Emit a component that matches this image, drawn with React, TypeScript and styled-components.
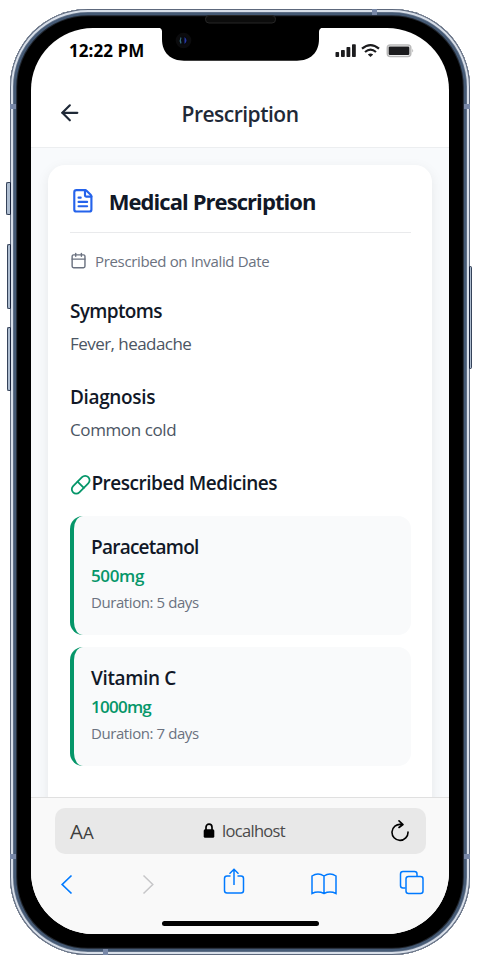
import React from "react";
import styled, { createGlobalStyle } from "styled-components";
import { ArrowLeft, Calendar, FileText, Pill } from "lucide-react";

const GlobalStyle = createGlobalStyle`
  * { box-sizing: border-box; }
  body { margin: 0; background: #fff; overflow: hidden; }
`;

const Page = styled.div`
  width: 490px;
  height: 965px;
  padding: 9px 0 0 10px;
  overflow: hidden;
  font-family: "Open Sans", "Noto Sans", sans-serif;
  color: #111827;
`;

const Device = styled.div`
  position: relative;
  width: 460px;
  height: 946px;
  padding: 19px 21px 20px;
  border-radius: 78px;
  background: #000;
  box-shadow:
    inset 0 0 0 1px #5d687c,
    inset 0 0 0 3px #d8dfe9,
    inset 0 0 0 3.8px #66758c,
    inset 0 0 0 6.2px #455a75,
    inset 0 0 0 7.2px #20252d;
`;

const SideButton = styled.div<{ $side: "left" | "right"; $top: number; $height: number; $out: number }>`
  position: absolute;
  ${(p) => p.$side}: ${(p) => -p.$out}px;
  top: ${(p) => p.$top}px;
  width: ${(p) => p.$out + 1}px;
  height: ${(p) => p.$height}px;
  border: 1px solid #35435a;
  border-${(p) => (p.$side === "left" ? "right" : "left")}-color: #17213a;
  border-radius: ${(p) => (p.$side === "left" ? "2px 0 0 2px" : "0 2px 2px 0")};
  background: #aebdd0;
`;

const Antenna = styled.div<{ $x: number; $y: number; $vertical?: boolean }>`
  position: absolute;
  left: ${(p) => p.$x}px;
  top: ${(p) => p.$y}px;
  width: ${(p) => (p.$vertical ? 6 : 5)}px;
  height: ${(p) => (p.$vertical ? 5 : 6)}px;
  background: #7888a8;
`;

const Screen = styled.div`
  display: flex;
  flex-direction: column;
  width: 418px;
  height: 906px;
  overflow: hidden;
  border-radius: 62px;
  background: #fff;
`;

const Notch = styled.svg`
  position: absolute;
  left: 148px;
  top: 6px;
`;

const StatusBar = styled.div`
  flex: none;
  display: flex;
  justify-content: space-between;
  align-items: center;
  height: 46px;
  padding: 0 35px 0 38px;
`;

const Text = styled.div<{ $size: number; $weight?: number; $line: number; $color?: string; $track?: number }>`
  margin: 0;
  font-size: ${(p) => p.$size}px;
  font-weight: ${(p) => p.$weight ?? 400};
  line-height: ${(p) => p.$line}px;
  color: ${(p) => p.$color ?? "#111827"};
  letter-spacing: ${(p) => p.$track ?? 0}px;
  white-space: nowrap;
`;

const Header = styled.header`
  flex: none;
  display: grid;
  grid-template-columns: 26px 1fr 26px;
  align-items: center;
  height: 74px;
  padding: 4px 26px 0;
  border-bottom: 1px solid #eceef0;
  text-align: center;
  h1 { padding-top: 2px; }
`;

const Content = styled.main`
  flex: 1;
  min-height: 0;
  padding: 17px 17px 0;
  overflow: hidden;
  background: #f8fafc;
`;

const Card = styled.section`
  height: 700px;
  padding: 22px 21px 22px 22px;
  border-radius: 17px;
  background: #fff;
  box-shadow: 0 4px 13px rgba(0, 0, 0, 0.08);
`;

const CardHeader = styled.div`
  display: flex;
  align-items: center;
  gap: 13px;
  height: 46px;
  padding-bottom: 16px;
  border-bottom: 1px solid #e9eaec;
  svg { margin-top: -1px; }
`;

const DateRow = styled.div`
  display: flex;
  align-items: center;
  gap: 8px;
  height: 20px;
  margin-top: 18px;
`;

const Section = styled.div`
  display: flex;
  flex-direction: column;
  gap: 6px;
  margin-top: 27px;
`;

const MedicinesTitle = styled.div`
  display: flex;
  align-items: flex-start;
  height: 27px;
  margin: 26px 0 20px;
  svg { flex: none; margin-top: 5px; }
`;

const MedicineList = styled.div`
  display: flex;
  flex-direction: column;
  gap: 12px;
`;

const Medicine = styled.article`
  height: 119px;
  padding: 17px;
  border-left: 4px solid #059669;
  border-radius: 13px;
  background: #f9fafb;
`;

const BrowserBar = styled.footer`
  flex: none;
  display: flex;
  flex-direction: column;
  height: 137px;
  padding: 10px 23px 0 24px;
  border-top: 1px solid #e0e0e0;
  background: #f9f9f9;
`;

const AddressBar = styled.div`
  display: grid;
  grid-template-columns: 60px 1fr 60px;
  align-items: center;
  height: 46px;
  padding: 0 15px;
  border-radius: 10px;
  background: #e8e8e8;
  > svg { justify-self: end; }
`;

const TextSize = styled.div`
  color: #3d3d3d;
  font-size: 20.5px;
  line-height: 24px;
  padding-top: 1px;
  span { font-size: 17px; }
`;

const Host = styled.div`
  display: flex;
  align-items: center;
  justify-content: center;
  gap: 7px;
  padding-left: 7px;
`;

const Tools = styled.nav`
  display: grid;
  grid-template-columns: 82px 82px 87px 89px 25px;
  align-items: end;
  height: 41px;
  padding-left: 4px;
`;

const HomeIndicator = styled.div`
  width: 157px;
  height: 5px;
  margin: 26px 0 0 107px;
  border-radius: 3px;
  background: #000;
`;

const medicines = [
  { name: "Paracetamol", dose: "500mg", duration: "5 days", nameTrack: -0.75, doseTrack: -0.35 },
  { name: "Vitamin C", dose: "1000mg", duration: "7 days", nameTrack: -0.35, doseTrack: -0.75 },
];

const StatusIcons = () => (
  <svg width="79" height="16" viewBox="0 0 79 16">
    <g fill="#1c1c1e">
      <rect x="0.5" y="9" width="3.6" height="5" rx="0.8" />
      <rect x="6" y="7" width="3.8" height="7" rx="0.8" />
      <rect x="11.5" y="4" width="3.8" height="10" rx="0.8" />
      <rect x="17" y="1.3" width="3.8" height="12.7" rx="0.8" />
    </g>
    <g fill="none" stroke="#1c1c1e" strokeWidth="2.2">
      <path d="M27 5.7q8.5-7.3 17 0" />
      <path d="M30 9q5.500-4.700 11 0" />
    </g>
    <path d="M32.800 11.500q2.700-2 5.400 0L35.500 14z" fill="#1c1c1e" />
    <rect x="52.300" y="2" width="23.500" height="11.600" rx="3" fill="#fff" stroke="#b9b9b9" strokeWidth="1.500" />
    <rect x="53.600" y="3.500" width="20.800" height="8.500" rx="1.300" fill="#1c1c1e" />
    <path d="M77.200 5.600q1.800 2 0 4z" fill="#b9b9b9" />
  </svg>
);

export default function App() {
  return (
    <Page>
      <GlobalStyle />
      <Device>
        <SideButton $side="left" $top={173} $height={33} $out={4} />
        <SideButton $side="left" $top={235} $height={65} $out={3} />
        <SideButton $side="left" $top={318} $height={64} $out={3} />
        <SideButton $side="right" $top={257} $height={103} $out={2} />
        <Antenna $x={362} $y={0} />
        <Antenna $x={0} $y={95} $vertical />
        <Antenna $x={454} $y={95} $vertical />
        <Antenna $x={0} $y={845} $vertical />
        <Antenna $x={454} $y={845} $vertical />
        <Antenna $x={93} $y={940} />

        <Screen>
          <StatusBar>
            <Text $size={17} $weight={700} $line={26} $color="#000" $track={0.05}>12:22 PM</Text>
            <StatusIcons />
          </StatusBar>
          <Header>
            <ArrowLeft size={25.7} strokeWidth={2} color="#1f2937" />
            <Text as="h1" $size={21} $weight={600} $line={28} $color="#1f2937" $track={-0.5}>Prescription</Text>
          </Header>
          <Content>
            <Card>
              <CardHeader>
                <FileText size={25.7} color="#2563eb" />
                <Text $size={22} $weight={700} $line={29} $track={-0.93}>Medical Prescription</Text>
              </CardHeader>
              <DateRow>
                <Calendar size={17.1} color="#6b7280" />
                <Text $size={15} $line={20} $color="#6b7280" $track={-0.36}>Prescribed on Invalid Date</Text>
              </DateRow>
              <Section>
                <Text $size={19} $weight={600} $line={27} $track={-0.65}>Symptoms</Text>
                <Text $size={17} $line={26} $color="#4b5563" $track={-0.55}>Fever, headache</Text>
              </Section>
              <Section>
                <Text $size={19} $weight={600} $line={27} $track={-0.35}>Diagnosis</Text>
                <Text $size={17} $line={26} $color="#4b5563" $track={-0.4}>Common cold</Text>
              </Section>
              <MedicinesTitle>
                <Pill size={21.4} color="#059669" />
                <Text $size={19} $weight={600} $line={28} $track={-0.47}>Prescribed Medicines</Text>
              </MedicinesTitle>
              <MedicineList>
                {medicines.map((m) => (
                  <Medicine key={m.name}>
                    <Text $size={19} $weight={600} $line={28} $track={m.nameTrack}>{m.name}</Text>
                    <Text $size={17} $weight={600} $line={29} $color="#059669" $track={m.doseTrack}>{m.dose}</Text>
                    <Text $size={15} $line={24} $color="#6b7280" $track={-0.42}>Duration: {m.duration}</Text>
                  </Medicine>
                ))}
              </MedicineList>
            </Card>
          </Content>
          <BrowserBar>
            <AddressBar>
              <TextSize>A<span>A</span></TextSize>
              <Host>
                <svg width="12" height="16" viewBox="0 0 12 16">
                  <rect x="0.700" y="6.300" width="10.600" height="8.500" rx="1.500" />
                  <path d="M3 7V4.200a3 3 0 0 1 6 0V7" fill="none" stroke="#000" strokeWidth="1.700" />
                </svg>
                <Text $size={16.5} $line={26} $color="#4a4a4a" $track={-0.7}>localhost</Text>
              </Host>
              <svg width="20" height="24" viewBox="0 0 20 24" fill="none" stroke="#000" strokeWidth="1.600" strokeLinecap="round" strokeLinejoin="round">
                <path d="M10 5.400A8 8 0 1 0 17 13M8 1.800l4 3.700L8 8.500" />
              </svg>
            </AddressBar>
            <Tools>
              <svg width="14" height="21" viewBox="0 0 14 21" fill="none" stroke="#007aff" strokeWidth="1.700">
                <path d="M12.500 1.500L3.200 10.500l9.300 9" />
              </svg>
              <svg width="14" height="21" viewBox="0 0 14 21" fill="none" stroke="#c6c6c8" strokeWidth="1.500">
                <path d="M2.500 1.500l9.300 9-9.300 9" />
              </svg>
              <svg width="22" height="28" viewBox="0 0 22 28" fill="none" stroke="#007aff" strokeWidth="1.500">
                <path d="M7.500 9H4Q1.500 9 1.500 11.500v12Q1.500 26 4 26h14q2.500 0 2.500-2.500v-12Q20.500 9 18 9h-3.500M11 18V2.500M6.500 6.700L11 2.300l4.500 4.400" />
              </svg>
              <svg width="27" height="23" viewBox="0 0 27 23" fill="none" stroke="#007aff" strokeWidth="1.500">
                <path d="M14 4v17.500M2 21.500V4q6-4.200 12 0 6-4.200 12 0V21.500q-6-2.800-12 0-6-2.800-12 0z" />
              </svg>
              <svg width="25" height="25" viewBox="0 0 25 25" fill="none" stroke="#007aff" strokeWidth="1.500">
                <path d="M6.500 18H4Q1.500 18 1.500 15.500V4Q1.500 1.500 4 1.500h11.500q2.500 0 2.500 2.500v2.500" />
                <rect x="7" y="6.500" width="17" height="17" rx="2.500" />
              </svg>
            </Tools>
            <HomeIndicator />
          </BrowserBar>
        </Screen>

        <Notch width="166" height="47" viewBox="158 15 166 47">
          <path d="M158 27.500q4 .5 4 4V39c0 14 9 21.700 22 21.700h113c13 0 22-7.700 22-21.700v-7q0-4 4-4.500z" fill="#000" />
          <rect x="205.500" y="15.500" width="70" height="7.500" rx="3.500" fill="#0c0c0c" stroke="#262626" />
          <circle cx="183.500" cy="40.500" r="7.800" fill="#0b0b0d" />
          <circle cx="183.500" cy="40.500" r="4" fill="#07080f" />
          <path d="M181 37.500q-1.500 3 0 6" fill="none" stroke="#356a78" strokeWidth="1.200" />
          <path d="M184.500 37q4 3.500 0 7z" fill="#2637a5" />
        </Notch>
      </Device>
    </Page>
  );
}
